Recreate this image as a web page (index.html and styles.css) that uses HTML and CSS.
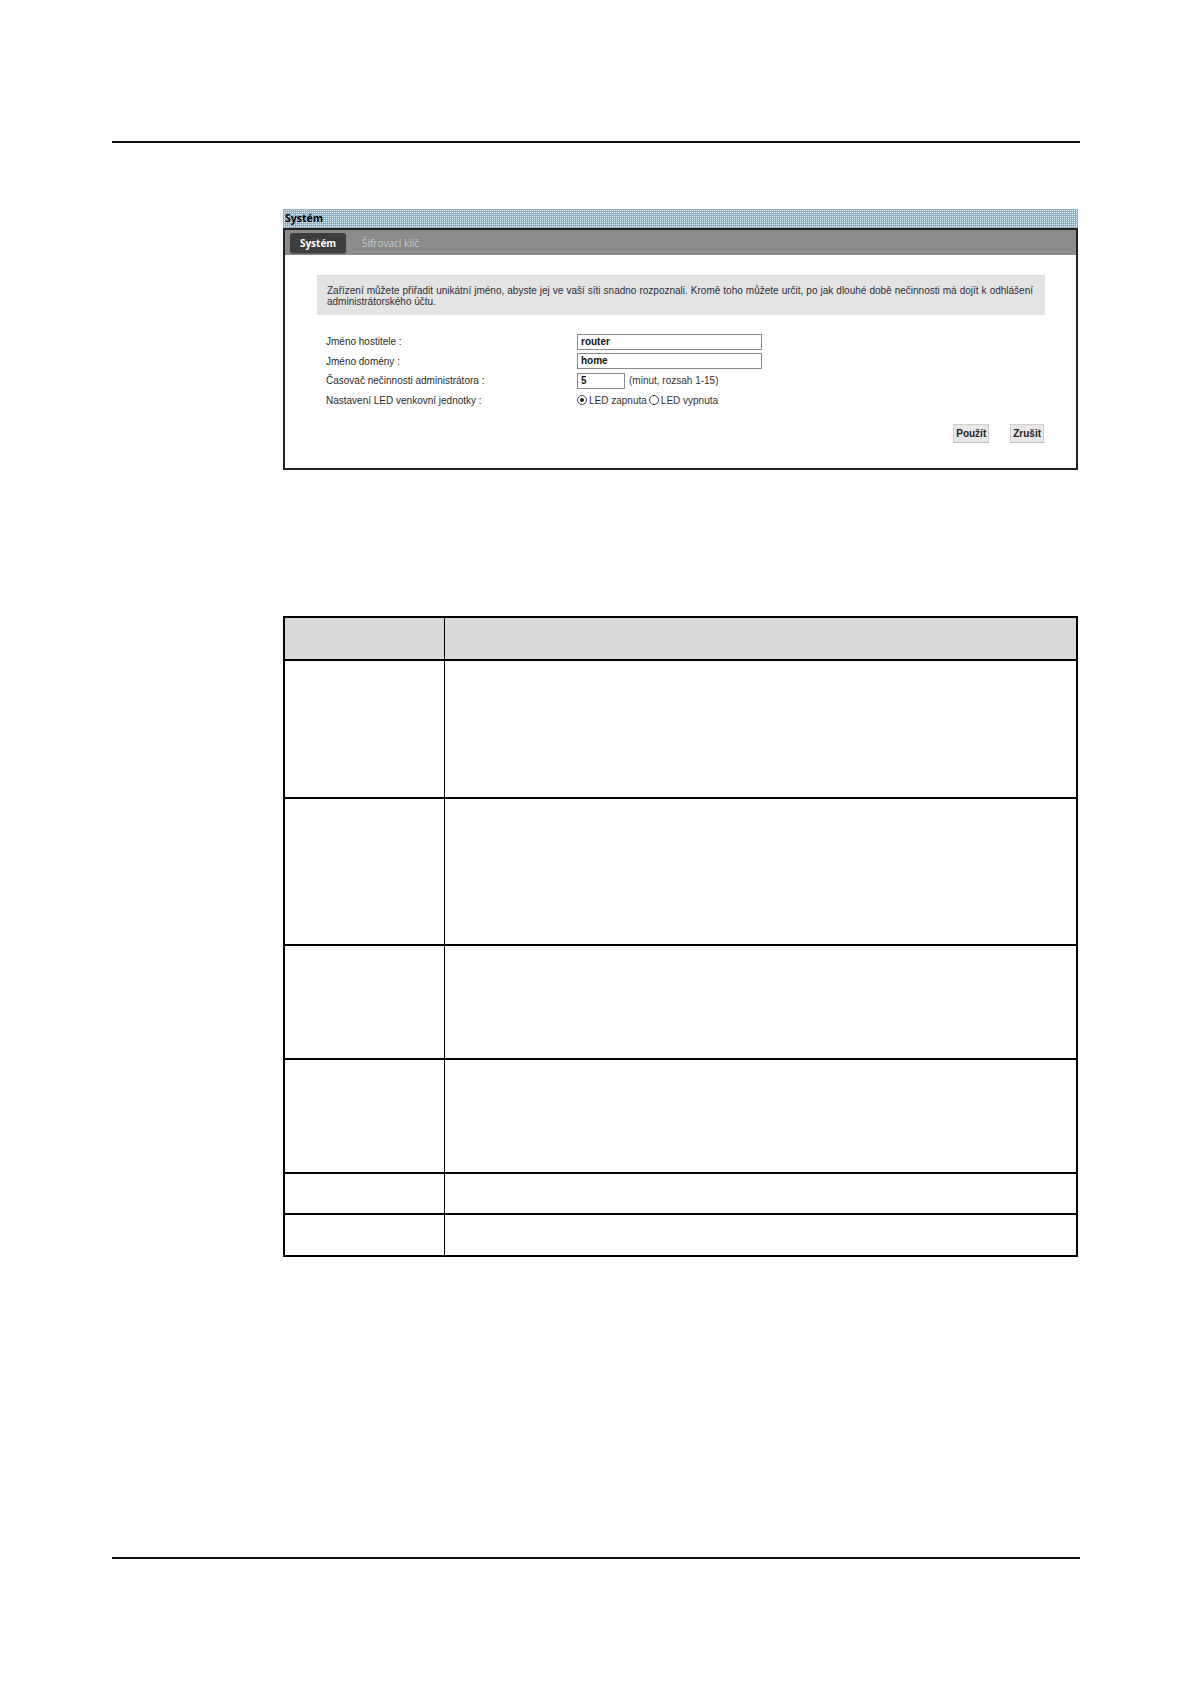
FILE: index.html
```html
<!DOCTYPE html>
<html lang="cs">
<head>
<meta charset="utf-8">
<title>Systém</title>
<link rel="stylesheet" href="styles.css">
</head>
<body>
<div class="page">
  <div class="rule rule-top"></div>

  <div class="figure">
    <div class="win-title">Systém</div>
    <div class="win-body">
      <div class="tabbar">
        <div class="tab tab-active">Systém</div>
        <div class="tab">Šifrovací klíč</div>
      </div>
      <div class="content">
        <div class="info">Zařízení můžete přiřadit unikátní jméno, abyste jej ve vaší síti snadno rozpoznali. Kromě toho můžete určit, po jak dlouhé době nečinnosti má dojít k odhlášení administrátorského účtu.</div>
        <div class="form">
          <div class="label">Jméno hostitele :</div>
          <div class="field"><span class="input input-wide">router</span></div>
          <div class="label">Jméno domény :</div>
          <div class="field"><span class="input input-wide">home</span></div>
          <div class="label">Časovač nečinnosti administrátora :</div>
          <div class="field"><span class="input input-short">5</span><span class="hint">(minut, rozsah 1-15)</span></div>
          <div class="label">Nastavení LED venkovní jednotky :</div>
          <div class="field">
            <span class="radio radio-on"></span><span class="rlabel">LED zapnuta</span>
            <span class="radio"></span><span class="rlabel">LED vypnuta</span>
          </div>
        </div>
        <div class="buttons">
          <span class="btn">Použít</span>
          <span class="btn">Zrušit</span>
        </div>
      </div>
    </div>
  </div>

  <div class="table">
    <div class="row row-head"><div class="c1"></div><div class="c2"></div></div>
    <div class="row r1"><div class="c1"></div><div class="c2"></div></div>
    <div class="row r2"><div class="c1"></div><div class="c2"></div></div>
    <div class="row r3"><div class="c1"></div><div class="c2"></div></div>
    <div class="row r4"><div class="c1"></div><div class="c2"></div></div>
    <div class="row r5"><div class="c1"></div><div class="c2"></div></div>
    <div class="row r6"><div class="c1"></div><div class="c2"></div></div>
  </div>

  <div class="rule rule-bottom"></div>
</div>
</body>
</html>
```

FILE: styles.css
```css
html, body {
  margin: 0;
  padding: 0;
  background: #ffffff;
}

body {
  font-family: "Liberation Sans", Arial, sans-serif;
  color: #000;
}

.page {
  width: 1191px;
  height: 1684px;
  padding-top: 141px;
  box-sizing: border-box;
}

.rule {
  height: 0;
  border-top: 2px solid #111;
  margin-left: 112px;
  width: 968px;
}

/* ---------- figure (screenshot of router UI) ---------- */
.figure {
  margin-left: 283px;
  margin-top: 66px;
  width: 795px;
}

.win-title {
  height: 19px;
  line-height: 18px;
  padding-left: 2px;
  font-family: "Open Sans", "DejaVu Sans", sans-serif;
  font-weight: 700;
  font-size: 10.5px;
  color: #000;
  background-color: #e4eef3;
  background-image:
    linear-gradient(to bottom, #8cb0c6 1px, transparent 1px),
    linear-gradient(to right, #8cb0c6 1px, transparent 1px);
  background-size: 2px 2px;
}

.win-body {
  border: 2px solid #222;
  height: 242px;
  box-sizing: border-box;
  background: #fff;
}

.tabbar {
  height: 25px;
  background: #8b8b8b;
  display: flex;
  align-items: center;
  padding-left: 5px;
  gap: 16px;
}

.tab {
  font-family: "Open Sans", "DejaVu Sans", sans-serif;
  font-size: 10px;
  color: #c8c8c8;
  height: 20px;
  line-height: 20px;
}

.tab-active {
  background: #3d3d3d;
  color: #fff;
  font-weight: 700;
  border-radius: 3px;
  width: 56px;
  text-align: center;
  box-shadow: 0 1px 1px rgba(0,0,0,0.35);
}

.content {
  padding: 20px 31px 0 32px;
}

.info {
  background: #e3e3e3;
  height: 40px;
  box-sizing: border-box;
  padding: 9px 12px 0 10px;
  font-size: 10px;
  line-height: 11px;
  color: #2e2e3a;
  text-align: justify;
  border-top: 1px dotted #d2d2d2;
}

.form {
  display: grid;
  grid-template-columns: 251px 1fr;
  grid-auto-rows: 19.5px;
  margin-top: 17px;
  padding-left: 9px;
  font-size: 10px;
  color: #2a2a2a;
  align-items: center;
}

.label {
  white-space: nowrap;
}

.field {
  display: flex;
  align-items: center;
}

.input {
  display: inline-block;
  line-height: 14px;
  border: 1px solid #8a8a8a;
  box-sizing: border-box;
  height: 16px;
  padding-left: 3px;
  font-weight: 700;
  font-size: 10px;
  color: #111;
  background: #fff;
}

.input-wide { width: 185px; }
.input-short { width: 48px; }

.hint {
  margin-left: 4px;
  color: #333;
}

.radio {
  display: inline-block;
  width: 10px;
  height: 10px;
  border: 1px solid #444;
  border-radius: 50%;
  box-sizing: border-box;
  position: relative;
  background: #fff;
}

.radio-on::after {
  content: "";
  position: absolute;
  left: 2px;
  top: 2px;
  width: 4px;
  height: 4px;
  border-radius: 50%;
  background: #222;
}

.rlabel {
  margin-left: 2px;
  margin-right: 2px;
  color: #333;
}

.buttons {
  display: flex;
  justify-content: flex-end;
  gap: 21px;
  margin-top: 14px;
  padding-right: 1px;
}

.btn {
  display: inline-block;
  height: 19px;
  line-height: 18px;
  padding: 0 2px;
  box-sizing: border-box;
  background: #e7e7e7;
  border: 1px solid #d0d0d0;
  border-bottom-color: #bdbdbd;
  font-size: 10px;
  font-weight: 700;
  color: #222;
}

/* ---------- table ---------- */
.table {
  margin-left: 283px;
  margin-top: 146px;
  width: 795px;
  border-left: 2px solid #000;
  border-right: 2px solid #000;
  border-top: 2px solid #000;
  box-sizing: border-box;
}

.row {
  display: flex;
  border-bottom: 2px solid #000;
  box-sizing: border-box;
}

.c1 {
  width: 159px;
  border-right: 1.5px solid #000;
}

.c2 {
  flex: 1;
}

.row-head { height: 43px; background: #d9d9d9; }
.r1 { height: 138px; }
.r2 { height: 147px; }
.r3 { height: 114px; }
.r4 { height: 114px; }
.r5 { height: 41px; }
.r6 { height: 42px; }

.rule-bottom {
  margin-top: 300px;
}
```
